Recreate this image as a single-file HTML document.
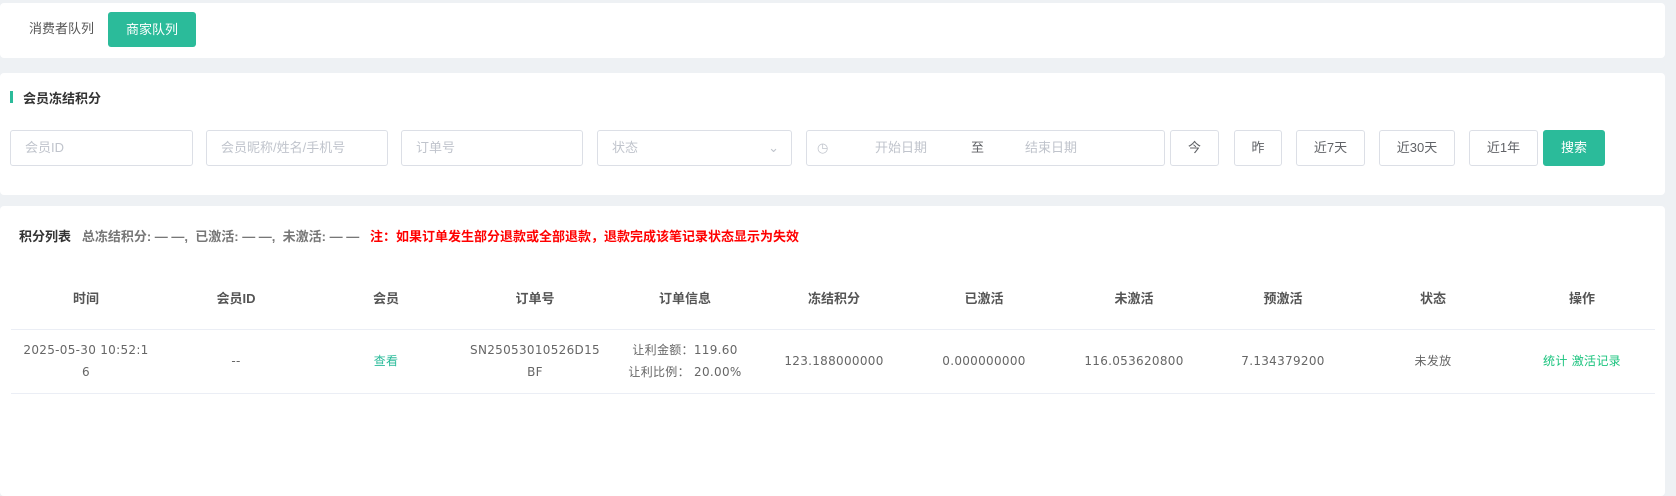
<!DOCTYPE html>
<html><head><meta charset="utf-8"><style>
*{box-sizing:border-box;margin:0;padding:0}
body{width:1676px;height:488px;background:#eef1f4;font-family:"Liberation Sans","Noto Sans CJK SC",sans-serif;font-size:13px;color:#555;position:relative;overflow:hidden}
.p{position:absolute;left:0;width:1665px;background:#fff;border-radius:4px}
.a{position:absolute}
.in{position:absolute;top:130px;height:36px;border:1px solid #dcdfe6;border-radius:3px;color:#c0c4cc;padding-left:14px;line-height:34px;font-size:13px}
.btn{position:absolute;top:130px;height:36px;border:1px solid #dcdfe6;border-radius:3px;color:#606266;text-align:center;line-height:34px;font-size:13px}
.g{background:#2bbb9a;color:#fff;border-color:#2bbb9a}
.c{position:absolute;width:150px;text-align:center}
.h{top:288px;font-weight:bold;color:#555;font-size:13px}
.r{color:#666;font-size:12px;line-height:22px;font-family:"DejaVu Sans","Noto Sans CJK SC",sans-serif;letter-spacing:0.3px}
</style></head><body>
<div class="p" style="top:3px;height:55px">
 <div class="a" style="left:29px;top:15px;color:#555">消费者队列</div>
 <div class="a g" style="left:108px;top:9px;width:88px;height:35px;border-radius:3px;text-align:center;line-height:35px">商家队列</div>
</div>
<div class="p" style="top:73px;height:122px">
 <div class="a" style="left:10px;top:18px;width:3px;height:12px;background:#2bbb9a"></div>
 <div class="a" style="left:23px;top:15px;font-weight:bold;color:#333">会员冻结积分</div>
</div>
<div class="in" style="left:10px;width:183px">会员ID</div>
<div class="in" style="left:206px;width:182px">会员昵称/姓名/手机号</div>
<div class="in" style="left:401px;width:182px">订单号</div>
<div class="in" style="left:597px;width:195px">状态<span style="position:absolute;right:12px;top:0;color:#c0c4cc">⌄</span></div>
<div class="in" style="left:806px;width:359px;padding-left:10px">◷<span style="position:absolute;left:68px">开始日期</span><span style="position:absolute;left:164px;color:#606266">至</span><span style="position:absolute;left:218px">结束日期</span></div>
<div class="btn" style="left:1170px;width:49px">今</div>
<div class="btn" style="left:1234px;width:48px">昨</div>
<div class="btn" style="left:1296px;width:69px">近7天</div>
<div class="btn" style="left:1379px;width:76px">近30天</div>
<div class="btn" style="left:1469px;width:69px">近1年</div>
<div class="btn g" style="left:1543px;width:62px">搜索</div>
<div class="p" style="top:206px;height:290px">
 <div class="a" style="left:19px;top:20px;font-size:13px;white-space:nowrap"><b style="color:#333">积分列表</b>&nbsp;&nbsp; <b style="color:#777">总冻结积分: — —,&nbsp; 已激活: — —,&nbsp; 未激活: — —</b>&nbsp;&nbsp; <b style="color:#f00">注：如果订单发生部分退款或全部退款，退款完成该笔记录状态显示为失效</b></div>
 <div class="a" style="left:11px;top:123px;width:1644px;height:1px;background:#ebeef5"></div>
 <div class="a" style="left:11px;top:187px;width:1644px;height:1px;background:#ebeef5"></div>
</div>
<div class="c h" style="left:11px">时间</div><div class="c h" style="left:161px">会员ID</div><div class="c h" style="left:311px">会员</div><div class="c h" style="left:460px">订单号</div><div class="c h" style="left:610px">订单信息</div><div class="c h" style="left:759px">冻结积分</div><div class="c h" style="left:909px">已激活</div><div class="c h" style="left:1059px">未激活</div><div class="c h" style="left:1208px">预激活</div><div class="c h" style="left:1358px">状态</div><div class="c h" style="left:1507px">操作</div>
<div class="c r" style="left:11px;top:339px;width:150px">2025-05-30 10:52:1<br>6</div>
<div class="c r" style="left:161px;top:350px">--</div>
<div class="c r" style="left:311px;top:350px;color:#2bbb9a">查看</div>
<div class="c r" style="left:466px;top:339px;width:138px;word-break:break-all">SN25053010526D15<br>BF</div>
<div class="c r" style="left:610px;top:339px">让利金额：119.60<br>让利比例： 20.00%</div>
<div class="c r" style="left:759px;top:350px">123.188000000</div>
<div class="c r" style="left:909px;top:350px">0.000000000</div>
<div class="c r" style="left:1059px;top:350px">116.053620800</div>
<div class="c r" style="left:1208px;top:350px">7.134379200</div>
<div class="c r" style="left:1358px;top:350px">未发放</div>
<div class="c r" style="left:1507px;top:350px;color:#19c37d">统计 激活记录</div>
</body></html>
